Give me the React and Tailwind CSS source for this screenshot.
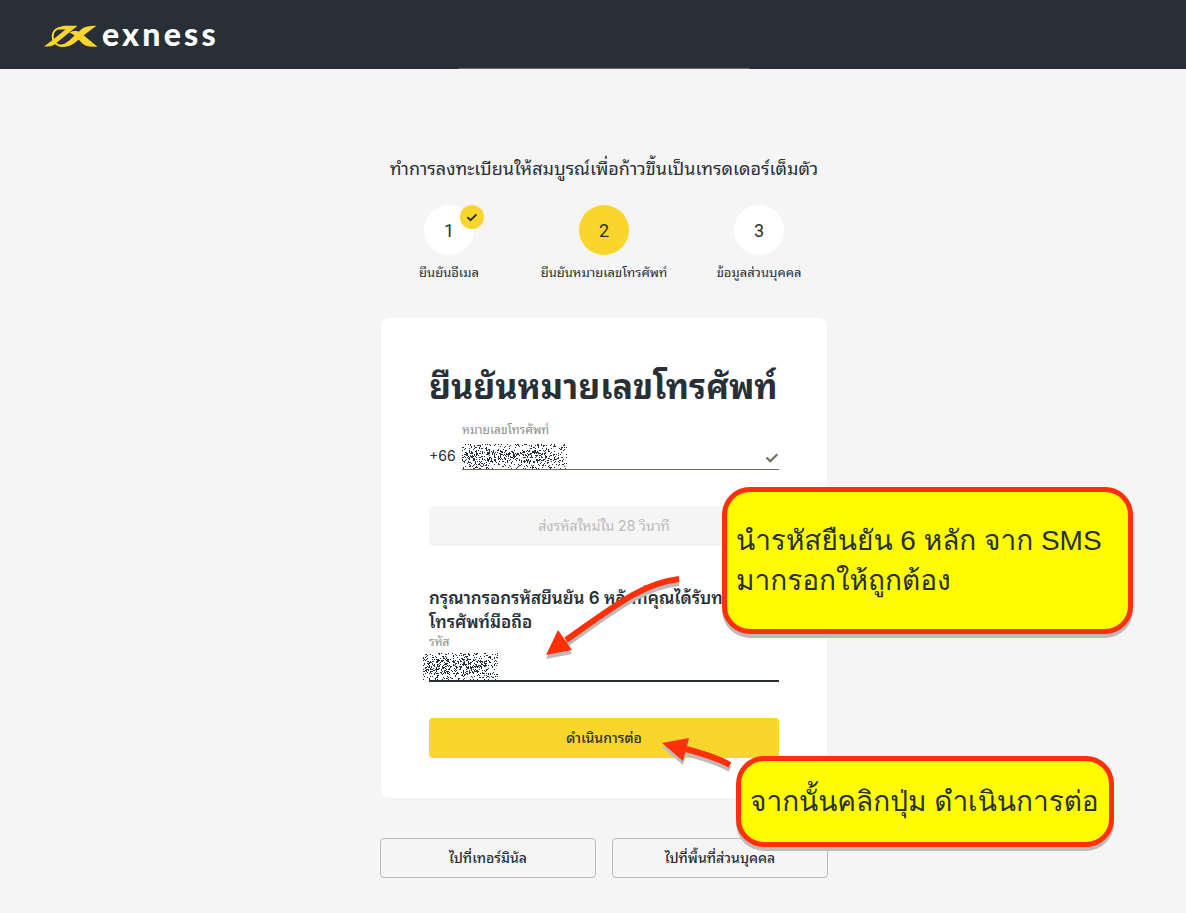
const CALLOUT =
  "absolute flex items-center rounded-[28px] border-[5px] border-[#ff3008] bg-[#fffb00] px-[9px] font-['Liberation_Sans',Loma,sans-serif] text-[28px] leading-10 text-[#282f36] shadow-[0_4px_0_#bbbbbb]";

function speckle(w, h, seed) {
  let s = seed;
  const next = () => {
    s = (s * 1664525 + 1013904223) % 4294967296;
    return s / 4294967296;
  };
  let d = '';
  for (let y = 0; y < h; y++) {
    for (let x = 0; x < w; x++) {
      const mid = y > h * 0.2 && y < h * 0.75 && x < w * 0.85;
      const wave = Math.sin(x * 0.9 + y * 0.4) * Math.cos(y * 0.8 - x * 0.3);
      if (next() < (mid ? 0.34 + wave * 0.2 : 0.19)) d += `M${x} ${y}h1v1h-1z`;
    }
  }
  return d;
}

const phoneMask = speckle(105, 25, 11);
const codeMask = speckle(75, 27, 29);

function Mask({ d, w, h, className }) {
  return (
    <svg aria-hidden="true" width={w} height={h} viewBox={`0 0 ${w} ${h}`} shapeRendering="crispEdges" className={className}>
      <path d={d} fill="#282f36" />
    </svg>
  );
}

function Check({ className }) {
  return (
    <svg aria-hidden="true" viewBox="0 0 14 10" className={className} fill="none" stroke="currentColor" strokeWidth="2.2">
      <path d="M1.5 4.5 5.3 8.2 12.3 1.3" />
    </svg>
  );
}

function Logo() {
  return (
    <svg aria-hidden="true" width="54" height="22" viewBox="4 7 54 22" fill="none">
      <path d="M4 28.6 L10 24 L25.5 11.6 L17.5 11.6 Q20 7.8 25 7.8 L37.5 7.8 L14.5 26.4 Q11.500 28.600 4 28.600 Z" fill="#fad52c" />
      <path d="M20 9.6 C13 11.5 11 18 14 23.5 C17 28.6 23.5 28.6 29 24" stroke="#fad52c" strokeWidth="1.9" />
      <path d="M18 28.6 C23 27.500 25.500 26 29 22.800 L42 10.800 Q45.500 7.700 56.500 7.800 L46 15.600 L34.500 25 Q28 30 18 28.600 Z" fill="#fad52c" />
      <path d="M29.5 14.400 Q36.500 10.600 41.500 15.400 L57.5 28.700 Q46.500 29.600 42.500 25.600 L36 19 Q33 15.500 29.500 14.400 Z" fill="#fad52c" />
    </svg>
  );
}

function Step({ n, label, active, done }) {
  return (
    <li className="flex w-[155px] shrink-0 flex-col items-center">
      <div className={`relative flex h-[50px] w-[50px] items-center justify-center rounded-full font-['Roboto',sans-serif] text-[18px] ${active ? 'bg-[#fad52c]' : 'bg-white'}`}>
        {n}
        {done && (
          <span className="absolute -right-[10px] top-0 flex h-6 w-6 items-center justify-center rounded-full bg-[#fad52c]">
            <Check className="h-[9px] w-3" />
          </span>
        )}
      </div>
      <span className="mt-[7px] whitespace-nowrap text-[13px] leading-5">{label}</span>
    </li>
  );
}

function Arrows() {
  const shapes = (
    <>
      <path d="M299 426 C262 430 232 455 186 487" fill="none" strokeWidth="6" />
      <path d="M166 502 178 477 192 497Z" stroke="none" />
      <path d="M350 612 Q336 604 306 596" fill="none" strokeWidth="6" />
      <path d="M282 590 309 585 303 608Z" stroke="none" />
    </>
  );
  return (
    <svg aria-hidden="true" width="448" height="640" viewBox="0 0 448 640" className="pointer-events-none absolute left-0 top-0">
      <g transform="translate(0 4)" stroke="#bbbbbb" fill="#bbbbbb">{shapes}</g>
      <g stroke="#ff3008" fill="#ff3008">{shapes}</g>
    </svg>
  );
}

export default function App() {
  return (
    <div className="min-h-screen overflow-x-hidden bg-[#f5f5f5] font-['Inter','Noto_Sans_Thai_Looped','Noto_Sans_Thai',sans-serif] text-[#282f36]">
      <header className="flex h-[69px] flex-col bg-[#282f36] pl-11">
        <a href="#home" aria-label="exness" className="flex flex-1 items-center gap-1 self-start pt-1 text-white">
          <Logo />
          <span className="pb-1 font-['Lato',sans-serif] text-[32px] font-black leading-9 tracking-widest">exness</span>
        </a>
        <span className="-ml-[22px] h-px w-[290px] self-center bg-[#6c7058]" />
      </header>
      <main className="flex justify-center pb-9 pl-[22px] pt-[84px]">
        <div className="relative w-[448px]">
          <h2 className="whitespace-nowrap text-center text-[18px] leading-8">ทำการลงทะเบียนให้สมบูรณ์เพื่อก้าวขึ้นเป็นเทรดเดอร์เต็มตัว</h2>
          <ol className="mt-5 flex justify-center">
            <Step n="1" label="ยืนยันอีเมล" done />
            <Step n="2" label="ยืนยันหมายเลขโทรศัพท์" active />
            <Step n="3" label="ข้อมูลส่วนบุคคล" />
          </ol>
          <form className="mx-px mt-9 rounded-lg bg-white px-12 pb-10 pt-11" onSubmit={(e) => e.preventDefault()}>
            <h1 className="whitespace-nowrap text-[34px] font-bold leading-[50px]">ยืนยันหมายเลขโทรศัพท์</h1>
            <div className="mt-2 flex">
              <span className="w-[33px] pt-[26px] text-[14px] leading-5">+66</span>
              <div className="relative flex-1 border-b border-[#6c7058]">
                <label htmlFor="phone" className="block text-[12px] leading-5 text-[#8c8e86]">หมายเลขโทรศัพท์</label>
                <input id="phone" type="tel" className="block h-[29px] w-full bg-transparent outline-none" />
                <Mask d={phoneMask} w={105} h={25} className="absolute bottom-0 left-0" />
                <Check className="absolute bottom-[6px] right-0 h-[10px] w-[14px] text-[#6c7058]" />
              </div>
            </div>
            <button type="button" disabled className="mt-9 h-10 w-full rounded-sm bg-[#f5f5f5] pb-0.5 text-[14px] text-[#bbbbbb]">ส่งรหัสใหม่ใน 28 วินาที</button>
            <p className="mt-10 whitespace-nowrap text-[17px] font-semibold leading-6">กรุณากรอกรหัสยืนยัน 6 หลักที่คุณได้รับทาง<br />โทรศัพท์มือถือ</p>
            <div className="relative border-b-2 border-[#282f36]">
              <label htmlFor="code" className="block text-[12px] leading-4 text-[#8c8e86]">รหัส</label>
              <input id="code" inputMode="numeric" className="block h-[30px] w-full bg-transparent outline-none" />
              <Mask d={codeMask} w={75} h={27} className="absolute -left-[6px] bottom-0" />
            </div>
            <button type="submit" className="mt-9 h-10 w-full rounded-sm bg-[#fad52c] pb-0.5 text-[14px] font-medium">ดำเนินการต่อ</button>
          </form>
          <div className="mt-10 grid grid-cols-2 gap-4">
            <button type="button" className="h-10 rounded-sm border border-[#bbbbbb] pb-0.5 text-[14px] font-medium">ไปที่เทอร์มินัล</button>
            <button type="button" className="h-10 rounded-sm border border-[#bbbbbb] pb-0.5 text-[14px] font-medium">ไปที่พื้นที่ส่วนบุคคล</button>
          </div>
          <div className={`${CALLOUT} left-[342px] top-[334px] h-[147px] w-[411px]`}>
            <p className="whitespace-nowrap">นำรหัสยืนยัน 6 หลัก จาก SMS<br />มากรอกให้ถูกต้อง</p>
          </div>
          <div className={`${CALLOUT} left-[356px] top-[603px] h-[91px] w-[378px]`}>
            <p className="whitespace-nowrap">จากนั้นคลิกปุ่ม ดำเนินการต่อ</p>
          </div>
          <Arrows />
        </div>
      </main>
    </div>
  );
}
